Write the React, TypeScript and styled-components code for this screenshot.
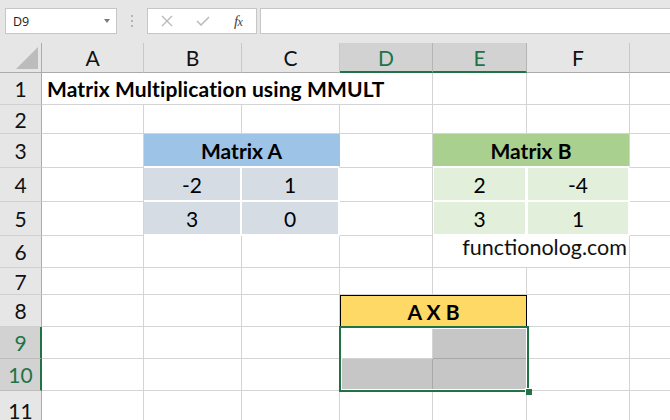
import React from "react";
import styled, { createGlobalStyle, css } from "styled-components";

const GlobalStyle = createGlobalStyle`
  html, body { margin: 0; padding: 0; }
  body { background: #e6e6e6; font-family: Lato, "Open Sans", sans-serif; }
`;

const Window = styled.div`
  width: 670px;
  height: 420px;
  overflow: hidden;
  display: flex;
  flex-direction: column;
  background: #e6e6e6;
`;

const Toolbar = styled.div`
  flex: none;
  height: 43px;
  box-sizing: border-box;
  padding: 8px 0 0 5px;
  display: flex;
  align-items: flex-start;
`;

const NameBox = styled.div`
  box-sizing: border-box;
  flex: none;
  width: 112px;
  height: 26px;
  background: #fff;
  border: 1px solid #c6c6c6;
  display: flex;
  align-items: center;
  justify-content: space-between;
  padding: 0 6px 0 7px;
  font-family: "Open Sans", "Noto Sans", sans-serif;
  font-size: 12.5px;
  color: #222;
`;

const Caret = styled.span`
  width: 0;
  height: 0;
  border-left: 3.5px solid transparent;
  border-right: 3.5px solid transparent;
  border-top: 4px solid #7a7a7a;
`;

const Grip = styled.div`
  flex: none;
  width: 2px;
  margin: 7px 14px 0 14px;
  display: flex;
  flex-direction: column;
  gap: 3px;
`;

const GripDot = styled.span`
  width: 2px;
  height: 2px;
  background: #b5b5b5;
`;

const ButtonBox = styled.div`
  box-sizing: border-box;
  flex: none;
  width: 110px;
  height: 26px;
  background: #fff;
  border: 1px solid #c6c6c6;
  display: flex;
  align-items: center;
  padding-left: 1px;
`;

const ButtonSlot = styled.span`
  width: 36px;
  height: 24px;
  display: flex;
  align-items: center;
  justify-content: center;
`;

const Fx = styled.span`
  font-family: "Liberation Serif", "DejaVu Serif", serif;
  font-style: italic;
  font-size: 15px;
  color: #444;
  letter-spacing: -0.5px;
  small { font-size: 12px; }
`;

const FormulaInput = styled.div`
  box-sizing: border-box;
  flex: 1;
  height: 26px;
  margin-left: 3px;
  margin-right: -4px;
  background: #fff;
  border: 1px solid #c6c6c6;
`;

const Sheet = styled.div`
  flex: none;
  width: 710px;
  display: grid;
  grid-template-columns: 42px 102px 98px 98px 93px 94px 103px 80px;
  grid-template-rows: 30px 32px 29px 34px 34px 34px 32px 27px 32px 32px 32px 40px;
  background: #fff;
`;

type Place = { $row: number; $col: number; $span?: number };

const placed = css<Place>`
  grid-row: ${(p) => p.$row};
  grid-column: ${(p) => p.$col} / span ${(p) => p.$span ?? 1};
`;

const Corner = styled.div<Place>`
  ${placed};
  box-sizing: border-box;
  background: #e6e6e6;
  border-right: 1px solid #ababab;
  border-bottom: 1px solid #ababab;
  display: flex;
  align-items: flex-end;
  justify-content: flex-end;
  padding: 0 3px 3px 0;
`;

const ColHeader = styled.div<Place & { $active?: boolean }>`
  ${placed};
  box-sizing: border-box;
  background: ${(p) => (p.$active ? "#d2d2d2" : "#e6e6e6")};
  color: ${(p) => (p.$active ? "#217346" : "#111")};
  border-right: 1px solid ${(p) => (p.$active ? "#b4b4b4" : "#c8c8c8")};
  border-bottom: ${(p) => (p.$active ? "2px solid #217346" : "1px solid #ababab")};
  display: flex;
  align-items: center;
  justify-content: center;
  padding-top: ${(p) => (p.$active ? "1px" : "0")};
  font-size: 21px;
`;

const RowHeader = styled.div<Place & { $active?: boolean }>`
  ${placed};
  box-sizing: border-box;
  background: ${(p) => (p.$active ? "#d2d2d2" : "#e6e6e6")};
  color: ${(p) => (p.$active ? "#217346" : "#111")};
  border-right: ${(p) => (p.$active ? "2px solid #217346" : "1px solid #ababab")};
  border-bottom: 1px solid ${(p) => (p.$active ? "#bdbdbd" : "#d0d0d0")};
  display: flex;
  align-items: center;
  justify-content: center;
  padding-left: ${(p) => (p.$active ? "1px" : "0")};
  font-size: 21px;
`;

type Kind =
  | "plain"
  | "title"
  | "headA"
  | "valA"
  | "headB"
  | "valB"
  | "brand"
  | "result"
  | "active"
  | "selected";

const kindCss: Record<Kind, ReturnType<typeof css>> = {
  plain: css``,
  title: css`
    font-weight: 700;
    justify-content: flex-start;
    padding-left: 5px;
    letter-spacing: 0.12px;
  `,
  headA: css`
    background: #9dc3e6;
    font-weight: 700;
    border-right-color: #9dc3e6;
    border-bottom: 2px solid #fff;
  `,
  valA: css`
    background: #d6dce4;
    border-right: 2px solid #fff;
    border-bottom: 2px solid #fff;
  `,
  headB: css`
    background: #a9d08e;
    font-weight: 700;
    border-bottom: 2px solid #fff;
  `,
  valB: css`
    background: #e2efda;
    border-right: 2px solid #fff;
    border-bottom: 2px solid #fff;
    border-left: 1px solid #fff;
  `,
  brand: css`
    justify-content: flex-end;
    padding: 0 2px 10px 0;
    font-size: 21.5px;
    color: #111;
  `,
  result: css`
    background: #ffd966;
    font-weight: 700;
    border: 1px solid #000;
  `,
  active: css`
    background: #fff;
  `,
  selected: css`
    background: #c6c6c6;
    border-right-color: #a8a8a8;
    border-bottom-color: #a8a8a8;
  `,
};

const Cell = styled.div<Place & { $kind: Kind }>`
  ${placed};
  box-sizing: border-box;
  min-width: 0;
  border-right: 1px solid #d4d4d4;
  border-bottom: 1px solid #d4d4d4;
  display: flex;
  align-items: center;
  justify-content: center;
  white-space: nowrap;
  overflow: visible;
  font-size: 21px;
  color: #000;
  ${(p) => kindCss[p.$kind]};
`;

const Selection = styled.div<Place & { $rows: number }>`
  ${placed};
  grid-row: ${(p) => p.$row} / span ${(p) => p.$rows};
  margin: -1px -2px -1px -1px;
  border: 2px solid #217346;
  box-shadow: inset 0 0 0 1px #fff;
  position: relative;
  pointer-events: none;
`;

const FillHandle = styled.span`
  position: absolute;
  right: -5px;
  bottom: -5px;
  width: 6px;
  height: 6px;
  background: #217346;
  border-top: 1px solid #fff;
  border-left: 1px solid #fff;
`;

const COLS = ["A", "B", "C", "D", "E", "F", "G"];
const ACTIVE_COLS = [3, 4];
const ACTIVE_ROWS = [9, 10];
const ROW_COUNT = 11;

type CellDef = { col: number; span?: number; kind: Kind; text?: string };

const CONTENT: Record<number, CellDef[]> = {
  1: [{ col: 0, span: 4, kind: "title", text: "Matrix Multiplication using MMULT" }],
  3: [
    { col: 1, span: 2, kind: "headA", text: "Matrix A" },
    { col: 4, span: 2, kind: "headB", text: "Matrix B" },
  ],
  4: [
    { col: 1, kind: "valA", text: "-2" },
    { col: 2, kind: "valA", text: "1" },
    { col: 4, kind: "valB", text: "2" },
    { col: 5, kind: "valB", text: "-4" },
  ],
  5: [
    { col: 1, kind: "valA", text: "3" },
    { col: 2, kind: "valA", text: "0" },
    { col: 4, kind: "valB", text: "3" },
    { col: 5, kind: "valB", text: "1" },
  ],
  6: [{ col: 4, span: 2, kind: "brand", text: "functionolog.com" }],
  8: [{ col: 3, span: 2, kind: "result", text: "A X B" }],
  9: [
    { col: 3, kind: "active" },
    { col: 4, kind: "selected" },
  ],
  10: [
    { col: 3, kind: "selected" },
    { col: 4, kind: "selected" },
  ],
};

function rowCells(r: number): CellDef[] {
  const defs = CONTENT[r] ?? [];
  const out: CellDef[] = [];
  let c = 0;
  while (c < COLS.length) {
    const d = defs.find((x) => x.col === c);
    if (d) {
      out.push(d);
      c += d.span ?? 1;
    } else {
      out.push({ col: c, kind: "plain" });
      c += 1;
    }
  }
  return out;
}

const XIcon = () => (
  <svg width="12" height="12" viewBox="0 0 12 12">
    <path d="M1 1 L11 11 M11 1 L1 11" stroke="#b9b9b9" strokeWidth="1.3" fill="none" />
  </svg>
);

const CheckIcon = () => (
  <svg width="14" height="10" viewBox="0 0 14 10">
    <path d="M1 5 L5 9 L13 1" stroke="#b9b9b9" strokeWidth="1.5" fill="none" />
  </svg>
);

const CornerTriangle = () => (
  <svg width="22" height="22" viewBox="0 0 22 22">
    <polygon points="22,0 22,22 0,22" fill="#bcbcbc" />
  </svg>
);

export default function App() {
  const rows = Array.from({ length: ROW_COUNT }, (_, i) => i + 1);
  return (
    <Window>
      <GlobalStyle />
      <Toolbar>
        <NameBox>
          D9
          <Caret />
        </NameBox>
        <Grip>
          <GripDot />
          <GripDot />
          <GripDot />
        </Grip>
        <ButtonBox>
          <ButtonSlot>
            <XIcon />
          </ButtonSlot>
          <ButtonSlot>
            <CheckIcon />
          </ButtonSlot>
          <ButtonSlot>
            <Fx>
              f<small>x</small>
            </Fx>
          </ButtonSlot>
        </ButtonBox>
        <FormulaInput />
      </Toolbar>
      <Sheet>
        <Corner $row={1} $col={1}>
          <CornerTriangle />
        </Corner>
        {COLS.map((c, i) => (
          <ColHeader key={c} $row={1} $col={i + 2} $active={ACTIVE_COLS.includes(i)}>
            {c === "G" ? "" : c}
          </ColHeader>
        ))}
        {rows.map((r) => (
          <React.Fragment key={r}>
            <RowHeader $row={r + 1} $col={1} $active={ACTIVE_ROWS.includes(r)}>
              {r}
            </RowHeader>
            {rowCells(r).map((d) => (
              <Cell key={d.col} $row={r + 1} $col={d.col + 2} $span={d.span} $kind={d.kind}>
                {d.text}
              </Cell>
            ))}
          </React.Fragment>
        ))}
        <Selection $row={10} $rows={2} $col={5} $span={2}>
          <FillHandle />
        </Selection>
      </Sheet>
    </Window>
  );
}
